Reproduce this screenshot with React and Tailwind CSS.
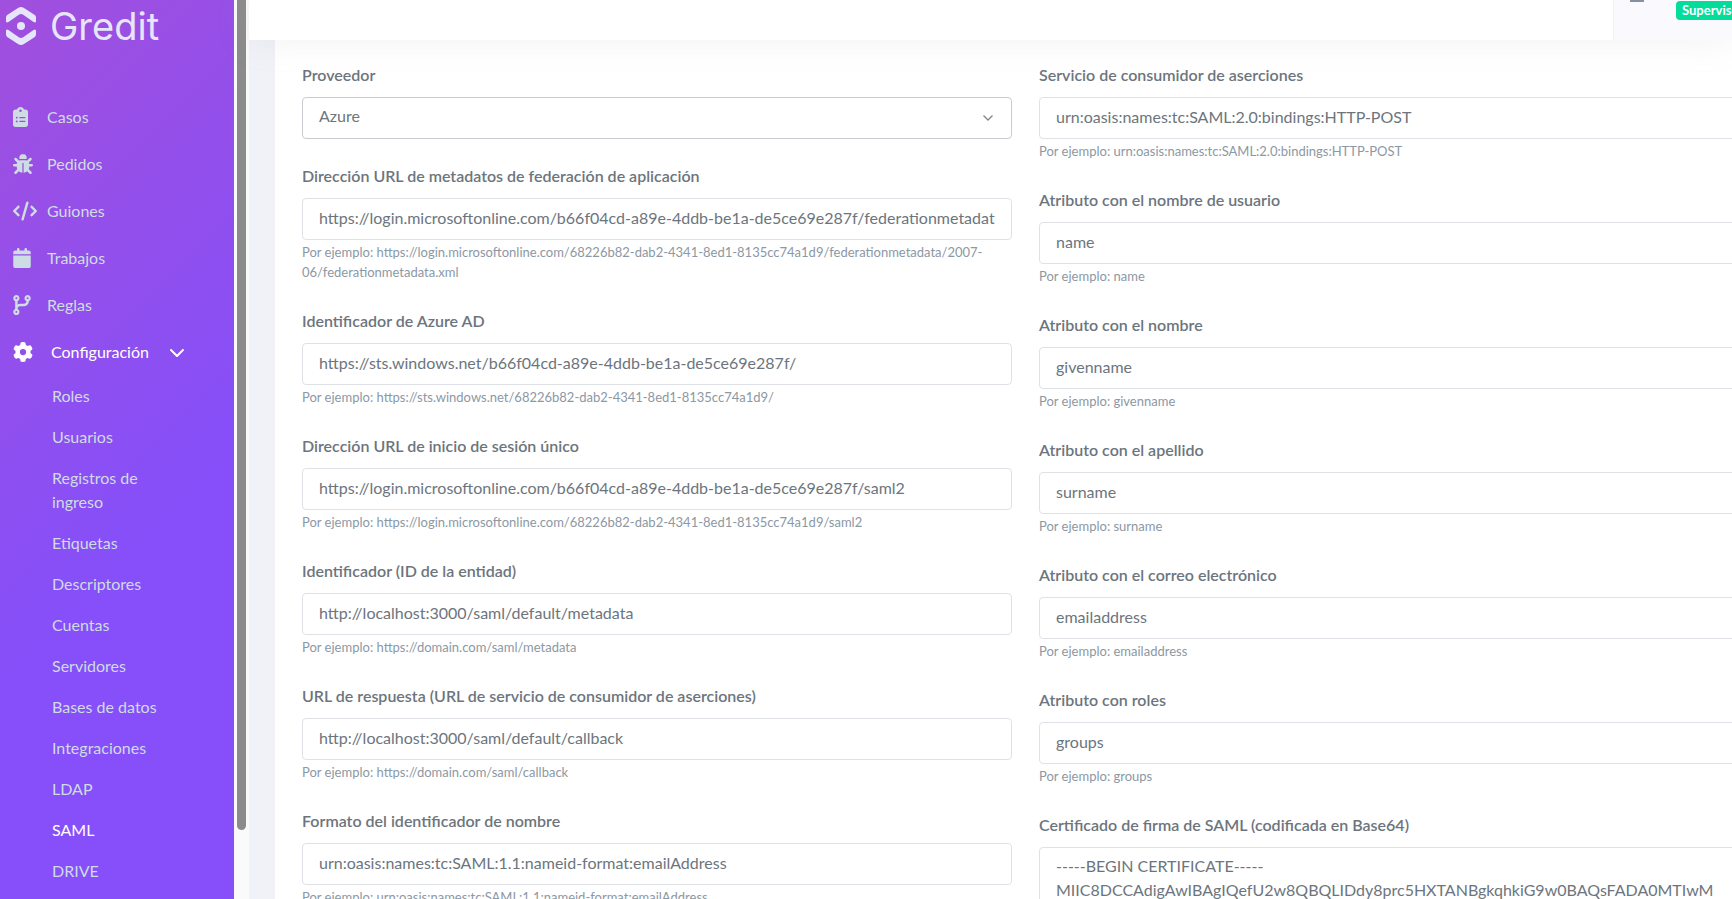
import { FaBug, FaCalendar, FaChevronDown, FaClipboardList, FaCode, FaCodeBranch, FaGear } from 'react-icons/fa6';

const menu = [
  { label: 'Casos', icon: FaClipboardList, size: 'w-[15px]' },
  { label: 'Pedidos', icon: FaBug, size: 'w-[20px]' },
  { label: 'Guiones', icon: FaCode, size: 'w-[24px]' },
  { label: 'Trabajos', icon: FaCalendar, size: 'w-[18px]' },
  { label: 'Reglas', icon: FaCodeBranch, size: 'w-[18px]' },
];

const settings = [
  'Roles', 'Usuarios', 'Registros de ingreso', 'Etiquetas', 'Descriptores', 'Cuentas',
  'Servidores', 'Bases de datos', 'Integraciones', 'LDAP', 'SAML', 'DRIVE',
];

const leftFields = [
  {
    id: 'metadata_url',
    label: 'Dirección URL de metadatos de federación de aplicación',
    value: 'https://login.microsoftonline.com/b66f04cd-a89e-4ddb-be1a-de5ce69e287f/federationmetadat',
    example: 'https://login.microsoftonline.com/68226b82-dab2-4341-8ed1-8135cc74a1d9/federationmetadata/2007-06/federationmetadata.xml',
  },
  {
    id: 'azure_id',
    label: 'Identificador de Azure AD',
    value: 'https://sts.windows.net/b66f04cd-a89e-4ddb-be1a-de5ce69e287f/',
    example: 'https://sts.windows.net/68226b82-dab2-4341-8ed1-8135cc74a1d9/',
  },
  {
    id: 'sso_url',
    label: 'Dirección URL de inicio de sesión único',
    value: 'https://login.microsoftonline.com/b66f04cd-a89e-4ddb-be1a-de5ce69e287f/saml2',
    example: 'https://login.microsoftonline.com/68226b82-dab2-4341-8ed1-8135cc74a1d9/saml2',
  },
  {
    id: 'entity_id',
    label: 'Identificador (ID de la entidad)',
    value: 'http://localhost:3000/saml/default/metadata',
    example: 'https://domain.com/saml/metadata',
  },
  {
    id: 'callback_url',
    label: 'URL de respuesta (URL de servicio de consumidor de aserciones)',
    value: 'http://localhost:3000/saml/default/callback',
    example: 'https://domain.com/saml/callback',
  },
  {
    id: 'name_format',
    label: 'Formato del identificador de nombre',
    value: 'urn:oasis:names:tc:SAML:1.1:nameid-format:emailAddress',
    example: 'urn:oasis:names:tc:SAML:1.1:nameid-format:emailAddress',
  },
];

const rightFields = [
  {
    id: 'binding',
    label: 'Servicio de consumidor de aserciones',
    value: 'urn:oasis:names:tc:SAML:2.0:bindings:HTTP-POST',
    example: 'urn:oasis:names:tc:SAML:2.0:bindings:HTTP-POST',
  },
  { id: 'attr_username', label: 'Atributo con el nombre de usuario', value: 'name', example: 'name' },
  { id: 'attr_name', label: 'Atributo con el nombre', value: 'givenname', example: 'givenname' },
  { id: 'attr_surname', label: 'Atributo con el apellido', value: 'surname', example: 'surname' },
  { id: 'attr_email', label: 'Atributo con el correo electrónico', value: 'emailaddress', example: 'emailaddress' },
  { id: 'attr_roles', label: 'Atributo con roles', value: 'groups', example: 'groups' },
];

const certificate = `-----BEGIN CERTIFICATE-----
MIIC8DCCAdigAwIBAgIQefU2w8QBQLIDdy8prc5HXTANBgkqhkiG9w0BAQsFADA0MTIwM`;

export default function App() {
  return (
    <div className="flex h-screen overflow-hidden bg-[#f1f2f7] font-['Lato',sans-serif] text-base text-[#6c757d]">
      <Sidebar />
      <div className="w-[15px] shrink-0 bg-[#fafafa] px-[3px]">
        <div className="h-[830px] rounded-b-full bg-[#8b8b8b]" />
      </div>
      <div className="flex min-w-0 flex-1 flex-col">
        <Topbar />
        <main className="min-h-0 flex-1 overflow-hidden pl-[26px]">
          <form className="-mr-[17px] grid grid-cols-2 gap-[27px] bg-white pt-[23px] pl-[27px]">
            <div className="min-w-0">
              <div className="mb-[25px]">
                <Label id="provider">Proveedor</Label>
                <div className="relative">
                  <select id="provider" defaultValue="Azure" className="block h-[42px] w-full appearance-none rounded border border-[#c8cbcf] bg-white px-4 pb-1 outline-none">
                    <option>Azure</option>
                  </select>
                  <svg viewBox="0 0 10 6" className="pointer-events-none absolute top-[18px] right-[19px] h-[6px] w-[10px]" fill="none" stroke="#7d868e" strokeWidth="1.3">
                    <path d="M0.5 0.5 5 5 9.5 0.5" />
                  </svg>
                </div>
              </div>
              {leftFields.map(field => <Field key={field.id} {...field} />)}
            </div>
            <div className="min-w-0">
              {rightFields.map(field => <Field key={field.id} {...field} />)}
              <Label id="certificate">Certificado de firma de SAML (codificada en Base64)</Label>
              <textarea id="certificate" rows={6} defaultValue={certificate}
                className="block w-full resize-none overflow-hidden rounded border border-[#dee2e6] bg-white px-4 py-1.5 leading-6 outline-none" />
            </div>
          </form>
        </main>
      </div>
    </div>
  );
}

function Sidebar() {
  return (
    <aside className="w-[234px] shrink-0 overflow-hidden bg-[linear-gradient(135deg,#a14fdd_0%,#864ff9_60%)] text-[#cedce4]">
      <a href="#" className="flex h-[51px] items-center gap-[14px] pl-[6px] text-[#e6e6fa]">
        <svg viewBox="0 0 30 38" className="h-[38px] w-[30px]" fill="currentColor">
          <path d="M0 14.500V10.500Q0 9 1.200 8.100L12.400 .8Q15 -.8 17.600 .8L28.800 8.100Q30 9 30 10.500V14.500Q29.500 16.200 27.500 15L17.200 7.800Q15 6.400 12.800 7.800L2.500 15Q.5 16.200 0 14.500Z" />
          <path d="M0 23.500V27.500Q0 29 1.200 29.900L12.400 37.200Q15 38.800 17.600 37.200L28.800 29.900Q30 29 30 27.500V23.500Q29.500 21.800 27.500 23L17.200 30.200Q15 31.600 12.800 30.200L2.500 23Q.5 21.800 0 23.500Z" />
          <circle cx="15" cy="19" r="4" />
        </svg>
        <span className="font-['Inter',sans-serif] text-[38px] leading-none">Gredit</span>
      </a>
      <nav className="pt-[42px]">
        <ul>
          {menu.map(({ label, icon: Icon, size }) => (
            <li key={label}>
              <a href="#" className="flex h-[47px] items-center pl-[13px]">
                <span className="w-[34px]"><Icon className={`h-[20px] ${size}`} /></span>
                {label}
              </a>
            </li>
          ))}
        </ul>
        <button type="button" className="flex h-12 w-full items-center pl-[13px] text-white">
          <span className="w-[38px]"><FaGear className="h-[20px] w-[20px]" /></span>
          Configuración
          <FaChevronDown className="ml-5 h-4 w-4" />
        </button>
        <ul className="flex flex-col gap-[17px] pt-2 pr-[70px] pl-[52px] leading-6">
          {settings.map(item => (
            <li key={item}>
              <a href="#" className={`block ${item === 'SAML' ? 'text-white' : ''}`}>{item}</a>
            </li>
          ))}
        </ul>
      </nav>
    </aside>
  );
}

function Topbar() {
  return (
    <header className="relative z-10 flex h-10 shrink-0 justify-end bg-white shadow-[0_0_35px_0_rgba(154,161,171,0.15)]">
      <div className="flex w-[119px] items-start gap-8 overflow-hidden border-l border-[#f1f3fa] bg-[#fafafe] pl-4">
        <span className="h-[2px] w-[14px] shrink-0 bg-[#8391a2]" />
        <span className="mt-px rounded bg-[#02dd9b] px-1.5 text-[13px] leading-[19px] font-bold text-white">Supervisor</span>
      </div>
    </header>
  );
}

function Label({ id, children }) {
  return <label htmlFor={id} className="mb-2.5 block leading-6 font-semibold">{children}</label>;
}

function Field({ id, label, value, example }) {
  return (
    <div className="mb-[27px]">
      <Label id={id}>{label}</Label>
      <input id={id} type="text" defaultValue={value} className="block h-[42px] w-full rounded border border-[#dee2e6] bg-white px-4 pb-1 outline-none" />
      <p className="mt-0.5 text-[13px] leading-5 text-[#8c98a4]">Por ejemplo: {example}</p>
    </div>
  );
}
